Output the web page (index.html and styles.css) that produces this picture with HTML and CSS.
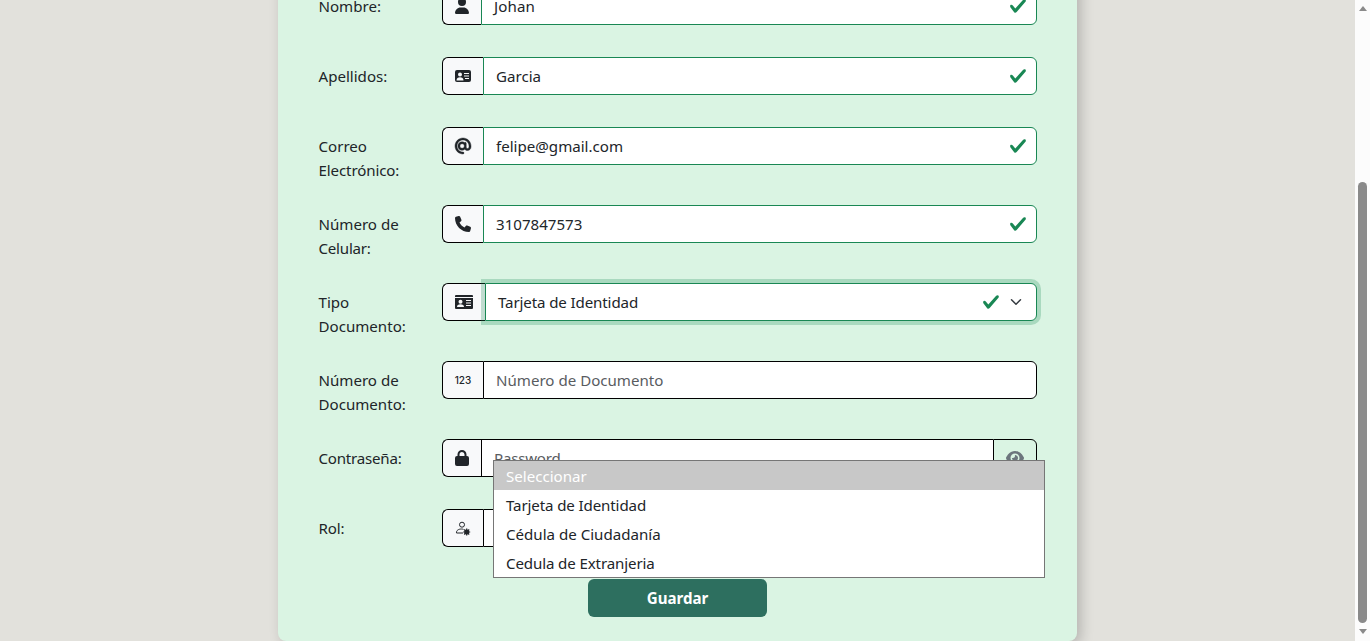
FILE: index.html
```html
<!DOCTYPE html>
<html lang="es">
<head>
<meta charset="utf-8">
<title>Registro de usuario</title>
<link rel="stylesheet" href="styles.css">
</head>
<body>
<svg class="defs" aria-hidden="true">
  <symbol id="check" viewBox="0 0 8 8"><path fill="#198754" d="M2.3 6.73.6 4.53c-.4-1.04.46-1.4 1.1-.8l1.1 1.4 3.4-3.8c.6-.63 1.6-.27 1.2.7l-4 4.6c-.43.5-.8.4-1.1.1z"/></symbol>
</svg>
<main class="page">
  <form class="card">
    <div class="row">
      <label class="label"><span>Nombre:</span></label>
      <div class="group valid">
        <span class="addon"><svg width="14" height="16" viewBox="0 0 448 512"><path d="M224 256A128 128 0 1 0 224 0a128 128 0 1 0 0 256zm-45.700 48C79.800 304 0 383.800 0 482.300C0 498.700 13.300 512 29.700 512H418.300c16.400 0 29.700-13.300 29.700-29.700C448 383.800 368.200 304 269.700 304H178.300z"/></svg></span>
        <div class="input"><span class="looser">Johan</span><svg class="check"><use href="#check"/></svg></div>
      </div>
    </div>
    <div class="row">
      <label class="label"><span>Apellidos:</span></label>
      <div class="group valid">
        <span class="addon"><svg width="16" height="16" viewBox="0 0 16 16"><rect y="2" width="16" height="12" rx="2"/><g fill="#f8f9fa"><circle cx="5" cy="6.500" r="2"/><path d="M1.500 12.500c0-2 1.500-3.200 3.500-3.200s3.500 1.200 3.500 3.200zM9 5h5v1H9zM9 7.500h5v1H9zM10 10h4v1h-4z"/></g></svg></span>
        <div class="input"><span>Garcia</span><svg class="check"><use href="#check"/></svg></div>
      </div>
    </div>
    <div class="row">
      <label class="label"><span>Correo</span><br><span class="tight">Electrónico:</span></label>
      <div class="group valid">
        <span class="addon"><svg class="at" width="16" height="16" viewBox="0 0 512 512"><path d="M256 64C150 64 64 150 64 256s86 192 192 192c17.700 0 32 14.300 32 32s-14.300 32-32 32C114.600 512 0 397.400 0 256S114.600 0 256 0S512 114.600 512 256v32c0 61.900-50.100 112-112 112c-34.500 0-65.400-15.600-85.900-40.200C290.400 381.800 258.400 395 224 395c-73 0-132-59-132-139s59-136 136-136c29 0 56 10 77 26c5-6 13-10 22-10c17.700 0 32 14.300 32 32v120c0 26.500 14.500 48 41 48s48-21.500 48-48v-32c0-106-86-192-192-192zm44 192a72 72 0 1 0-144 0a72 72 0 1 0 144 0z"/></svg></span>
        <div class="input"><span>felipe@gmail.com</span><svg class="check"><use href="#check"/></svg></div>
      </div>
    </div>
    <div class="row">
      <label class="label"><span>Número de</span><br><span class="tighter">Celular:</span></label>
      <div class="group valid">
        <span class="addon"><svg width="16" height="16" viewBox="0 0 512 512"><path d="M164.900 24.600c-7.700-18.600-28-28.500-47.400-23.200l-88 24C12.100 30.200 0 46 0 64C0 311.400 200.600 512 448 512c18 0 33.800-12.100 38.600-29.500l24-88c5.300-19.400-4.600-39.700-23.200-47.400l-96-40c-16.300-6.800-35.200-2.100-46.300 11.600L304.700 368C234.300 334.700 177.300 277.700 144 207.300L193.300 167c13.700-11.200 18.400-30 11.600-46.300l-40-96z"/></svg></span>
        <div class="input"><span>3107847573</span><svg class="check"><use href="#check"/></svg></div>
      </div>
    </div>
    <div class="row">
      <label class="label"><span>Tipo</span><br><span>Documento:</span></label>
      <div class="group valid">
        <span class="addon"><svg width="18" height="16" viewBox="0 0 18 16"><path d="M0 3V2q0-1 1-1h16q1 0 1 1v1zM0 4h18v10q0 1-1 1H1q-1 0-1-1z"/><g fill="#f8f9fa"><circle cx="5.500" cy="7.800" r="2"/><path d="M2 13c0-1.900 1.300-2.700 3.500-2.700S9 11.100 9 13zM11 6h5v1h-5zM11 8.500h5v1h-5zM11 11h5v1h-5z"/></g></svg></span>
        <div class="input focus"><span class="tight">Tarjeta de Identidad</span><svg class="check"><use href="#check"/></svg><svg class="chevron" viewBox="0 0 16 16"><path d="m2 5 6 6 6-6"/></svg></div>
        <ul class="options">
          <li class="selected"><span>Seleccionar</span></li>
          <li><span class="tight">Tarjeta de Identidad</span></li>
          <li><span>Cédula de Ciudadanía</span></li>
          <li><span class="tight">Cedula de Extranjeria</span></li>
        </ul>
      </div>
    </div>
    <div class="row">
      <label class="label"><span>Número de</span><br><span>Documento:</span></label>
      <div class="group">
        <span class="addon"><span class="digits">123</span></span>
        <div class="input placeholder"><span>Número de Documento</span></div>
      </div>
    </div>
    <div class="row">
      <label class="label"><span class="tighter">Contraseña:</span></label>
      <div class="group">
        <span class="addon"><svg width="14" height="16" viewBox="0 0 14 16"><path d="M2.500 6V4.500a4.500 4.500 0 0 1 9 0V6H12a2 2 0 0 1 2 2v6a2 2 0 0 1-2 2H2a2 2 0 0 1-2-2V8a2 2 0 0 1 2-2zm2 0h5V4.500a2.500 2.500 0 0 0-5 0z"/></svg></span>
        <div class="input placeholder"><span class="tighter">Password</span></div>
        <span class="addon eye"><svg width="18" height="16" viewBox="0 0 576 512"><path fill-rule="evenodd" d="M288 32c-80.800 0-145.500 36.800-192.600 80.600C48.600 156 17.300 208 2.500 243.700c-3.300 7.900-3.300 16.700 0 24.600C17.300 304 48.600 356 95.400 399.400C142.500 443.200 207.200 480 288 480s145.500-36.800 192.600-80.600c46.800-43.500 78.100-95.400 93-131.100c3.300-7.900 3.300-16.700 0-24.600c-14.900-35.700-46.200-87.700-93-131.100C433.500 68.800 368.800 32 288 32zM144 256a144 144 0 1 1 288 0a144 144 0 1 1-288 0zm144-64c0 35.300-28.700 64-64 64c-7.100 0-13.900-1.200-20.300-3.300c-5.500-1.800-11.900 1.600-11.700 7.400c.3 6.900 1.300 13.800 3.200 20.700c13.700 51.200 66.400 81.600 117.600 67.900s81.600-66.400 67.900-117.600c-11.100-41.500-47.800-69.400-88.600-71.100c-5.800-.2-9.200 6.100-7.400 11.700c2.100 6.400 3.300 13.200 3.300 20.300z"/></svg></span>
      </div>
    </div>
    <div class="row">
      <label class="label"><span class="tight">Rol:</span></label>
      <div class="group">
        <span class="addon"><svg width="16" height="16" viewBox="0 0 16 16"><g fill="none" stroke="#212529"><circle cx="7" cy="4.700" r="2.500"/><path d="M8 13H1.500c-.4-2.500 2-4 5-4q1 0 2 .4"/><circle cx="11.700" cy="12" r="1.500" stroke-width="2"/><path stroke-width="1.200" d="M11.700 8.500v7M8.200 12h7M9.200 9.500l5 5M14.200 9.500l-5 5"/></g></svg></span>
        <div class="input"></div>
      </div>
    </div>
    <button class="save" type="button"><span>Guardar</span></button>
  </form>
</main>
<aside class="scrollbar"><i class="up"></i><i class="thumb"></i><i class="down"></i></aside>
</body>
</html>
```
FILE: styles.css
```css
* { box-sizing: border-box; }
body {
  margin: 0;
  height: 641px;
  overflow: hidden;
  display: flex;
  background: #e2e1dc;
  color: #212529;
  font: 15.1px/24px "Noto Sans", "Open Sans", sans-serif;
}
.defs { position: absolute; width: 0; height: 0; }
.page {
  flex: 1;
  height: 641px;
  display: flex;
  align-items: flex-end;
  justify-content: center;
}
.card {
  width: 799px;
  flex: none;
  padding: 48px 40px 24px;
  border-radius: 8px;
  background: #daf4e3;
  box-shadow: 4px 4px 13px rgba(0, 0, 0, .2);
}
.row {
  display: grid;
  grid-template-columns: 124px 595px;
  align-items: start;
  margin-bottom: 16px;
}
.label { padding: 7px 0 7px .5px; white-space: nowrap; }
.input span, .options span { white-space: nowrap; }
.tight { letter-spacing: -.12px; }
.tighter { letter-spacing: -.22px; }
.looser { letter-spacing: .1px; }
.group { display: flex; height: 38px; margin-bottom: 16px; position: relative; }
.addon {
  display: flex;
  align-items: center;
  padding: 0 12px;
  border: 1px solid #000;
  border-right: 0;
  border-radius: 6px 0 0 6px;
  background: #f8f9fa;
}
.addon svg { display: block; fill: #212529; }
.addon .at { stroke: #212529; stroke-width: 14; overflow: visible; }
.digits { width: 16px; font: 500 10px/16px Inter, sans-serif; letter-spacing: 0; display: flex; justify-content: center; }
.input {
  flex: 1;
  display: flex;
  align-items: center;
  padding: 0 9px 0 12px;
  border: 1px solid #000;
  border-radius: 0 6px 6px 0;
  background: #fff;
}
.valid .input { border-color: #198754; }
.input.focus { box-shadow: 0 0 0 4px rgba(25, 135, 84, .25); padding-right: 12px; z-index: 1; }
.placeholder { color: #595c5f; }
.check { width: 18px; height: 18px; margin-left: auto; }
.chevron { width: 12px; height: 12px; margin-left: 10px; margin-right: 2px; fill: none; stroke: #343a40; stroke-width: 2; stroke-linecap: round; stroke-linejoin: round; }
.group .placeholder:not(:last-child) { border-radius: 0; border-right: 0; }
.eye { width: 44px; border-right: 1px solid #000; border-radius: 0 6px 6px 0; background: transparent; }
.eye svg { fill: #6c757d; }
.options {
  position: absolute;
  top: 177px;
  left: 51px;
  z-index: 3;
  width: 552px;
  margin: 0;
  padding: 0;
  list-style: none;
  border: 1px solid #767676;
  background: #fff;
}
.options li { height: 29px; padding-left: 12px; line-height: 30px; }
.options .selected { background: #c8c8c8; color: #fff; }
.save {
  display: block;
  width: 179px;
  height: 38px;
  margin: 0 auto;
  padding: 0;
  border: 0;
  border-radius: 6px;
  background: #2d6f5f;
  color: #fff;
  font: 700 15.1px/24px "Noto Sans", sans-serif;
}
.scrollbar {
  width: 15px;
  height: 641px;
  display: flex;
  flex-direction: column;
  align-items: center;
  background: #fcfcfc;
}
.up, .down { border: 4.5px solid transparent; border-top-width: 0; border-bottom: 5px solid #8a8a8a; margin-top: 6px; }
.thumb { width: 9px; height: 441px; margin-top: 171px; border-radius: 5px; background: #8a8a8a; }
.down { border-bottom-width: 0; border-top: 5px solid #8a8a8a; }
```
